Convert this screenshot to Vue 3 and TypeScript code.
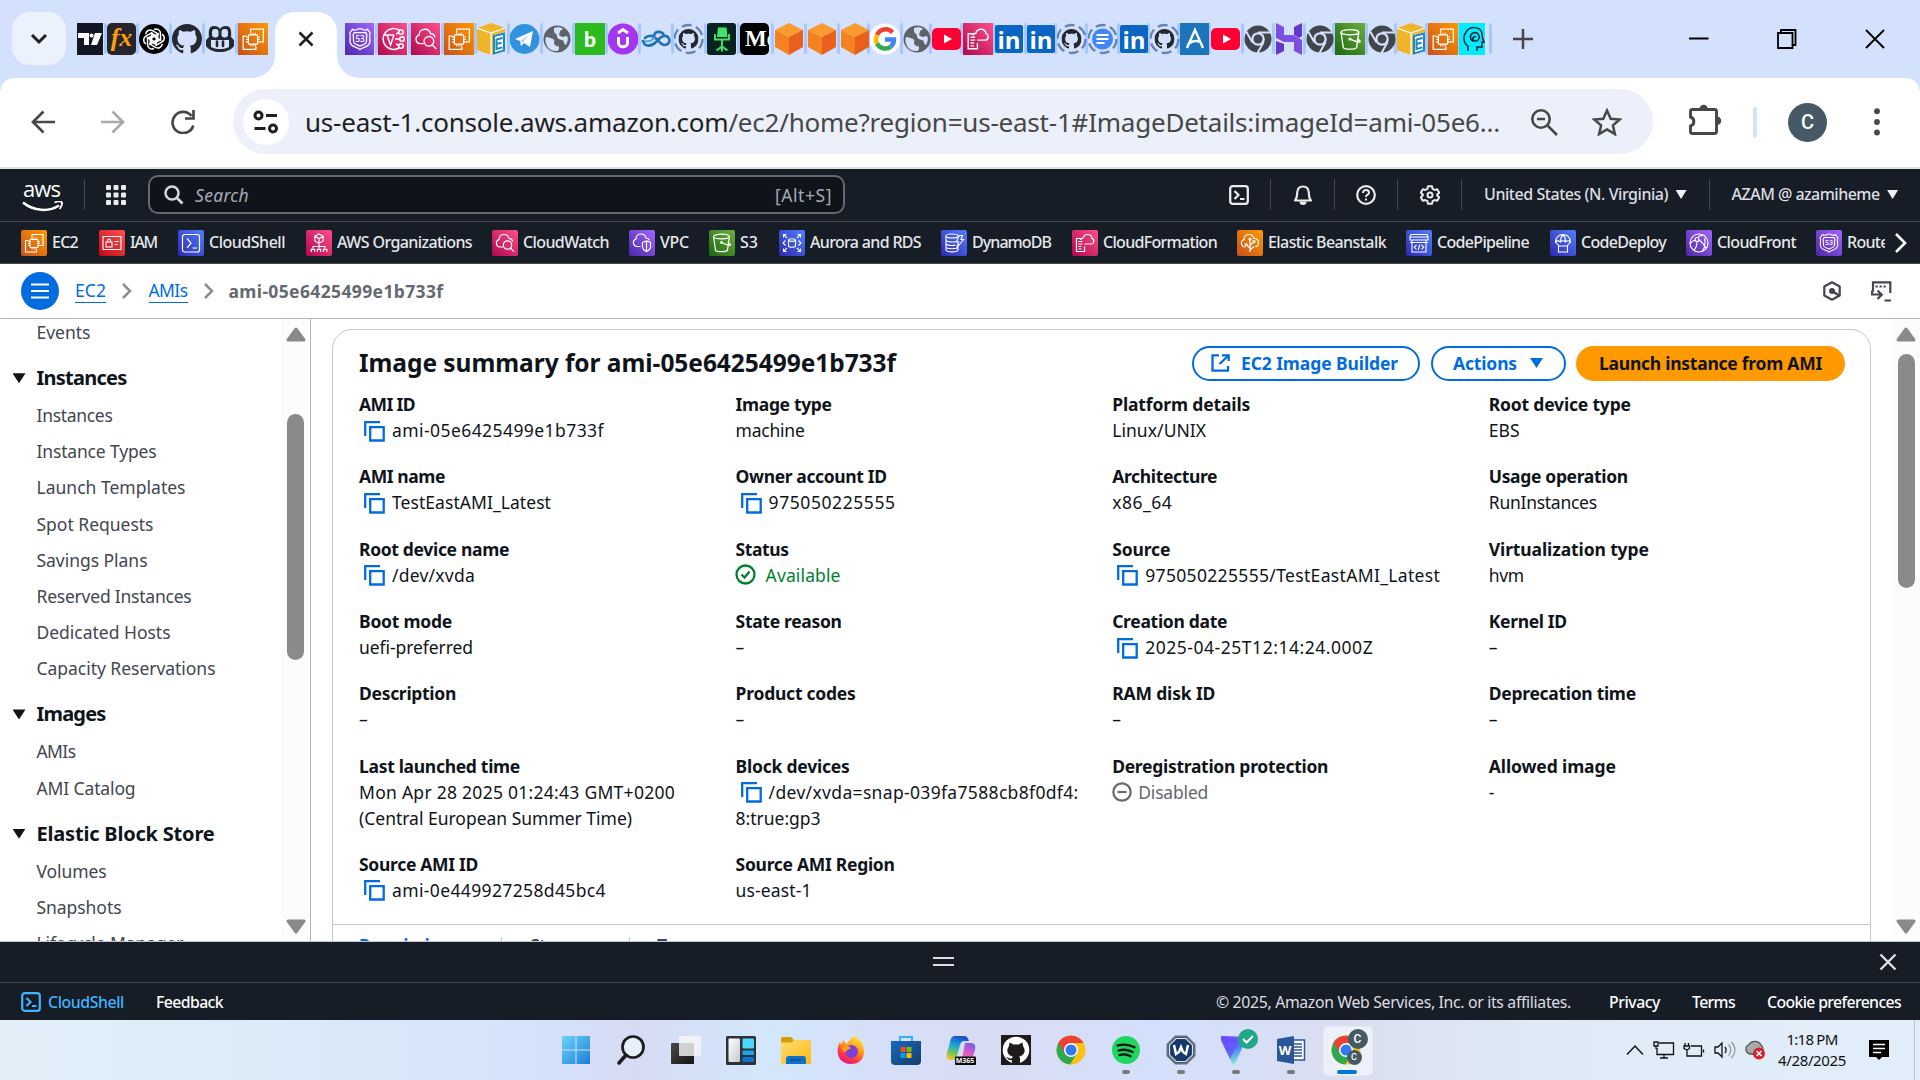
<script setup lang="ts">
type Entry = { label: string; lw: number; kind?: 'cp' | 'ok' | 'off'; lines: [string, number][] }

// Spreads a text's letters so that it takes the given number of pixels.
const vFit = {
  mounted(el: HTMLElement, binding: { value: number }) {
    const n = (el.textContent ?? '').length
    if (!n || !binding.value) return
    const diff = binding.value - el.getBoundingClientRect().width
    el.style.letterSpacing = `${diff / n}px`
  },
}

// Letters that lie on top of an icon's shape.
const marks: Record<string, string> = {
  'f-fx': 'fx', 'f-b': 'b', 'f-medium': 'Me', 'f-in': 'in', 'f-r53': '53', 'g-r53': '53', 't-m365': 'M365', 't-word': 'W',
}

const leftTabs = [
  { icon: 'f-17', w: 30 }, { icon: 'f-fx', w: 32 }, { icon: 'f-openai', w: 33 },
  { icon: 'f-github', w: 33 }, { icon: 'f-copilot', w: 33 }, { icon: 'f-ec2', w: 36 },
]
const rightTabs: [string, number][] = [
  ['f-r53', 33], ['f-vpc', 33], ['f-cw', 33], ['f-ec2', 33], ['f-box', 33], ['f-telegram', 33], ['f-globe', 32],
  ['f-b', 33], ['f-u', 33], ['f-dolphin', 33], ['f-ghd', 33], ['f-chair', 33], ['f-medium', 34], ['f-cube', 33],
  ['f-cube', 33], ['f-cube', 30], ['f-google', 33], ['f-globe', 29], ['f-yt', 31], ['f-cfn', 32], ['f-in', 32],
  ['f-in', 30], ['f-ghd', 31], ['f-docs', 32], ['f-in', 30], ['f-ghd', 30], ['f-a', 31], ['f-yt', 33],
  ['f-chrome', 31], ['f-h', 31], ['f-chrome', 29], ['f-s3', 33], ['f-chrome', 29], ['f-box', 31], ['f-ec2', 31], ['f-head', 33],
]
const favorites = [
  { n: 'EC2', i: 'g-ec2', c: 'orange', w: 78, t: 26 }, { n: 'IAM', i: 'g-iam', c: 'red', w: 79, t: 27 },
  { n: 'CloudShell', i: 'g-shell', c: 'blue', w: 128, t: 76 }, { n: 'AWS Organizations', i: 'g-org', c: 'pink', w: 186, t: 135 },
  { n: 'CloudWatch', i: 'g-cw', c: 'pink', w: 137, t: 86 }, { n: 'VPC', i: 'g-vpc', c: 'purple', w: 80, t: 29 },
  { n: 'S3', i: 'g-s3', c: 'green', w: 70, t: 18 }, { n: 'Aurora and RDS', i: 'g-rds', c: 'blue', w: 162, t: 111 },
  { n: 'DynamoDB', i: 'g-ddb', c: 'blue', w: 131, t: 79 }, { n: 'CloudFormation', i: 'g-cfn', c: 'pink', w: 165, t: 114 },
  { n: 'Elastic Beanstalk', i: 'g-eb', c: 'orange', w: 169, t: 118 }, { n: 'CodePipeline', i: 'g-pipe', c: 'blue', w: 144, t: 92 },
  { n: 'CodeDeploy', i: 'g-deploy', c: 'blue', w: 136, t: 85 }, { n: 'CloudFront', i: 'g-cf', c: 'purple', w: 130, t: 79 },
  { n: 'Route 53', i: 'g-r53', c: 'purple', w: 120, t: 62 },
]
const sidebar: { head?: string; hw?: number; items: [string, number][] }[] = [
  { items: [['Events', 54]] },
  { head: 'Instances', hw: 90, items: [['Instances', 76], ['Instance Types', 120], ['Launch Templates', 149], ['Spot Requests', 117], ['Savings Plans', 111], ['Reserved Instances', 155], ['Dedicated Hosts', 134], ['Capacity Reservations', 179]] },
  { head: 'Images', hw: 69, items: [['AMIs', 39], ['AMI Catalog', 99]] },
  { head: 'Elastic Block Store', hw: 178, items: [['Volumes', 70], ['Snapshots', 85], ['Lifecycle Manager', 147]] },
]
const details: Entry[] = [
  { label: 'AMI ID', lw: 56, kind: 'cp', lines: [['ami-05e6425499e1b733f', 212]] },
  { label: 'Image type', lw: 96, lines: [['machine', 69]] },
  { label: 'Platform details', lw: 138, lines: [['Linux/UNIX', 94]] },
  { label: 'Root device type', lw: 142, lines: [['EBS', 31]] },
  { label: 'AMI name', lw: 86, kind: 'cp', lines: [['TestEastAMI_Latest', 159]] },
  { label: 'Owner account ID', lw: 151, kind: 'cp', lines: [['975050225555', 127]] },
  { label: 'Architecture', lw: 105, lines: [['x86_64', 60]] },
  { label: 'Usage operation', lw: 139, lines: [['RunInstances', 108]] },
  { label: 'Root device name', lw: 150, kind: 'cp', lines: [['/dev/xvda', 83]] },
  { label: 'Status', lw: 53, kind: 'ok', lines: [['Available', 75]] },
  { label: 'Source', lw: 58, kind: 'cp', lines: [['975050225555/TestEastAMI_Latest', 295]] },
  { label: 'Virtualization type', lw: 160, lines: [['hvm', 35]] },
  { label: 'Boot mode', lw: 93, lines: [['uefi-preferred', 114]] },
  { label: 'State reason', lw: 106, lines: [['–', 0]] },
  { label: 'Creation date', lw: 115, kind: 'cp', lines: [['2025-04-25T12:14:24.000Z', 228]] },
  { label: 'Kernel ID', lw: 78, lines: [['–', 0]] },
  { label: 'Description', lw: 97, lines: [['–', 0]] },
  { label: 'Product codes', lw: 120, lines: [['–', 0]] },
  { label: 'RAM disk ID', lw: 103, lines: [['–', 0]] },
  { label: 'Deprecation time', lw: 147, lines: [['–', 0]] },
  { label: 'Last launched time', lw: 161, lines: [['Mon Apr 28 2025 01:24:43 GMT+0200', 316], ['(Central European Summer Time)', 273]] },
  { label: 'Block devices', lw: 114, kind: 'cp', lines: [['/dev/xvda=snap-039fa7588cb8f0df4:', 310], ['8:true:gp3', 85]] },
  { label: 'Deregistration protection', lw: 216, kind: 'off', lines: [['Disabled', 70]] },
  { label: 'Allowed image', lw: 127, lines: [['-', 0]] },
  { label: 'Source AMI ID', lw: 119, kind: 'cp', lines: [['ami-0e449927258d45bc4', 214]] },
  { label: 'Source AMI Region', lw: 159, lines: [['us-east-1', 76]] },
]
const taskbar = [
  { i: 't-win' }, { i: 't-search' }, { i: 't-view' }, { i: 't-widgets' }, { i: 't-explorer' }, { i: 't-firefox' },
  { i: 't-store' }, { i: 't-m365' }, { i: 't-github' }, { i: 't-chrome' }, { i: 't-spotify', run: true },
  { i: 't-w', run: true }, { i: 't-vpn', run: true }, { i: 't-word', run: true }, { i: 't-chrome2', active: true },
]
</script>

<template>
  <div class="screen">
    <svg class="sprite" aria-hidden="true">
      <defs>
        <linearGradient id="go" x1="0" y1="1" x2="1" y2="0"><stop offset="0" stop-color="#c8511b" /><stop offset="1" stop-color="#f90" /></linearGradient>
        <linearGradient id="gp" x1="0" y1="1" x2="1" y2="0"><stop offset="0" stop-color="#b0084d" /><stop offset="1" stop-color="#ff4f8b" /></linearGradient>
        <linearGradient id="gv" x1="0" y1="1" x2="1" y2="0"><stop offset="0" stop-color="#4d27a8" /><stop offset="1" stop-color="#a166ff" /></linearGradient>
        <linearGradient id="gg" x1="0" y1="1" x2="1" y2="0"><stop offset="0" stop-color="#1b660f" /><stop offset="1" stop-color="#6cae3e" /></linearGradient>
        <linearGradient id="wb" x1="0" y1="0" x2="1" y2="1"><stop offset="0" stop-color="#6fd3fb" /><stop offset="1" stop-color="#1a7fd4" /></linearGradient>
        <linearGradient id="fy" x1="0" y1="0" x2="1" y2="1"><stop offset="0" stop-color="#ffdf70" /><stop offset="1" stop-color="#fbb917" /></linearGradient>
        <linearGradient id="ff" x1=".8" y1="0" x2=".3" y2="1"><stop offset="0" stop-color="#fff44f" /><stop offset=".45" stop-color="#ff980e" /><stop offset=".75" stop-color="#ff3647" /><stop offset="1" stop-color="#e31587" /></linearGradient>
        <linearGradient id="st" x1="0" y1="0" x2="1" y2="1"><stop offset="0" stop-color="#1769c2" /><stop offset="1" stop-color="#173d68" /></linearGradient>
        <linearGradient id="m1" x1=".5" y1="0" x2=".2" y2="1"><stop offset="0" stop-color="#1b4fd0" /><stop offset=".4" stop-color="#1aa6d8" /><stop offset=".7" stop-color="#6dc65a" /><stop offset="1" stop-color="#ffc21c" /></linearGradient>
        <linearGradient id="m2" x1=".7" y1="0" x2=".3" y2="1"><stop offset="0" stop-color="#7a5cf0" /><stop offset=".5" stop-color="#e45cc0" /><stop offset="1" stop-color="#ff7d53" /></linearGradient>
        <linearGradient id="vp" x1=".3" y1="0" x2=".6" y2="1"><stop offset="0" stop-color="#6d4aff" /><stop offset=".45" stop-color="#4d7bf5" /><stop offset="1" stop-color="#7ff5d2" /></linearGradient>
        <linearGradient id="dk" x1="0" y1="0" x2="1" y2="1"><stop offset="0" stop-color="#4a4a4a" /><stop offset="1" stop-color="#141414" /></linearGradient>
        <linearGradient id="wh" x1="0" y1="0" x2="1" y2="1"><stop offset="0" stop-color="#fff" /><stop offset="1" stop-color="#c4c8cc" /></linearGradient>
      </defs>

      <!-- service glyphs -->
      <symbol id="g-ec2" viewBox="0 0 26 26"><g fill="none" stroke="#fff" stroke-width="1.1"><path d="M11 7.500V4.500h11V15.500h-3M7.500 10.500H4.500V22H15.500v-2.500" /><rect x="9" y="9.500" width="8" height="8" rx=".8" /><path d="M11 9.500V7.500M13 9.500V7.500M15 9.500V7.500M11 19.500v-2M13 19.500v-2M15 19.500v-2M9 11.500H7M9 13.500H7M9 15.500H7M19 11.500h-2M19 13.500h-2M19 15.500h-2" stroke-width=".9" /></g></symbol>
      <symbol id="g-iam" viewBox="0 0 26 26"><g fill="none" stroke="#fff" stroke-width="1.1"><path d="M4 6.500h18v13H4zM8.500 7V6M17.500 7V6" /><rect x="7" y="12" width="6" height="5" /><path d="M8.500 12v-1.500a1.500 1.500 0 013 0V12M15.500 11.500h4.500M15.500 14.500h3" /></g></symbol>
      <symbol id="g-shell" viewBox="0 0 26 26"><g fill="none" stroke="#fff" stroke-width="1.200"><rect x="4.500" y="4.500" width="17" height="17.500" rx="2.200" /><path d="M9 8.500l4 4.700-4 4.700M14.500 18h4.500" /></g></symbol>
      <symbol id="g-org" viewBox="0 0 26 26"><g fill="none" stroke="#fff" stroke-width="1.100"><path d="M13 4l4.200 2.300v4.700L13 13.400 8.800 11V6.300zM8.800 6.300L13 8.600l4.200-2.300M13 8.600v7.900M7 18.500v-2h12v2M13 16.500v2" /><path d="M5.200 22v-2.600h3.400V22M11.300 22v-2.600h3.400V22M17.400 22v-2.600h3.400V22" /></g></symbol>
      <symbol id="g-cw" viewBox="0 0 26 26"><g fill="none" stroke="#fff" stroke-width="1.200"><path d="M11 17H8a3.800 3.800 0 01-1-7.400C7 6 9.600 4.500 12 4.500c2.700 0 4.500 1.700 5 4 2.200 0 3.500 1.400 3.800 3" /><circle cx="15.500" cy="15" r="4.200" /><path d="M18.500 18l3.300 3.700" /></g></symbol>
      <symbol id="g-vpc" viewBox="0 0 26 26"><g fill="none" stroke="#fff" stroke-width="1.200"><path d="M11.500 16.500H8a3.800 3.800 0 01-1-7.400C7 5.500 9.600 4 12 4c2.700 0 4.500 1.700 5 4 1.700 0 3 .9 3.600 2.300M13.500 12.500l4-1.700 4 1.700v4c0 2.500-2 4-4 5-2-1-4-2.500-4-5zM17.500 11v10" /></g></symbol>
      <symbol id="g-s3" viewBox="0 0 26 26"><g fill="none" stroke="#fff" stroke-width="1.200"><ellipse cx="12.500" cy="6.500" rx="8" ry="2.300" /><path d="M4.500 6.500l2 13.500c.5 2.200 11.500 2.200 12 0l2-13.500M12.500 12.500c3.500 1.800 9 3.500 9.200 2.500s-1.800-2-3-2.500" /><circle cx="12.500" cy="12.500" r=".8" /></g></symbol>
      <symbol id="g-rds" viewBox="0 0 26 26"><g fill="none" stroke="#fff" stroke-width="1.100"><ellipse cx="13" cy="10" rx="3.500" ry="1.300" /><path d="M9.500 10v6c0 1.700 7 1.700 7 0v-6M8 8L4.500 4.500M4.500 7.500v-3h3M18 8l3.500-3.500M18.500 4.500h3v3M8 18l-3.500 3.500M4.500 18.500v3h3M18 18l3.500 3.500M21.500 18.500v3h-3M6.500 10.500L4 13l2.500 2.500M19.500 10.500L22 13l-2.500 2.500" /></g></symbol>
      <symbol id="g-ddb" viewBox="0 0 26 26"><g fill="none" stroke="#fff" stroke-width="1.100"><ellipse cx="11" cy="6" rx="6" ry="2" /><path d="M5 6v14c0 2.500 12 2.500 12 0v-3M5 10c0 2 7 2.500 10 1.500M5 13.500c0 2 7 2.500 9.500 1.500M5 17c0 2 9 2.500 12 .5M18 5.500h3.500l-1.500 4h2.500L16 17.500l1.500-5.500h-2z" /></g></symbol>
      <symbol id="g-cfn" viewBox="0 0 26 26"><g fill="none" stroke="#fff" stroke-width="1.200"><path d="M12.500 16.500V21.500h-8V8.500H9M6.500 11.500h4M6.500 14h4M6.500 16.500h3M6.500 19h3M12.500 14h6.700a2.900 2.900 0 00.8-5.600C19.800 6 17.800 4.500 15.500 4.500c-2.600 0-4 1.700-4.300 3.500-1.700.2-2.500 1-2.500 2" /></g></symbol>
      <symbol id="g-eb" viewBox="0 0 26 26"><g fill="none" stroke="#fff" stroke-width="1.200"><path d="M8.500 17H8a3.800 3.800 0 01-1-7.400C7 6 9.600 4.500 12 4.500c2.700 0 4.500 1.700 5 4 2.400 0 4.500 1.500 4.500 4.200 0 2.300-1.500 4-3.500 4M13 22V9M13 18l-3.500-3M13 15.500l3.500-3.500M13 20l4-3.500" /><circle cx="13" cy="9" r="1" /><circle cx="9" cy="14.500" r="1" /><circle cx="17" cy="11.500" r="1" /></g></symbol>
      <symbol id="g-pipe" viewBox="0 0 26 26"><g fill="none" stroke="#fff" stroke-width="1.100"><path d="M4 7l1-2.500h16L22 7v3H4zM4 7h18M6 10v12h14V10M4 12.500h18M10.500 15l-2.300 2.200 2.300 2.200M15.500 15l2.300 2.200-2.300 2.200M13.800 14.500l-1.600 5.500" /></g></symbol>
      <symbol id="g-deploy" viewBox="0 0 26 26"><g fill="none" stroke="#fff" stroke-width="1.100"><path d="M5.500 12a7.500 7.500 0 0115 0c-1.500-1.500-3.500-1.500-5 0-1.500-1.500-3.500-1.500-5 0-1.500-1.500-3.500-1.500-5 0zM13 4.500c-2 2-2.500 4.500-2.500 7.500M13 4.500c2 2 2.500 4.500 2.500 7.500M5.500 12L9 16M20.500 12L17 16M8.500 16h9v6h-9z" /></g></symbol>
      <symbol id="g-cf" viewBox="0 0 26 26"><g fill="none" stroke="#fff" stroke-width="1.100"><circle cx="13" cy="13" r="9" /><path d="M10 10c-2.500.5-5 2-6 4M12 7c2-1.500 5-2 7-1.500M12.500 9.500c3 2 6 6 7.500 9M11 12c0 3-1 6-3 8.500M18.500 8c1 4 .5 9-2 13" /><circle cx="11" cy="9.500" r="2" /></g></symbol>
      <symbol id="g-r53" viewBox="0 0 26 26"><g fill="none" stroke="#fff" stroke-width="1.100"><path d="M6.500 4.500c1.500 1 3 .9 4 .3.800-.6 1.500-.8 2.500-.8s1.700.2 2.500.8c1 .6 2.500.7 4-.3L22 8c-2 3 1.500 6.500-1.500 10-2 2.500-5.500 2-7.500 4.200-2-2.200-5.500-1.700-7.500-4.200C2.500 14.500 6 11 4 8z" /><path d="M8 7.500h10l1 2c-1 2.500.5 5-1 7-1.200 1.400-3.500 1.500-5 2.700-1.500-1.200-3.800-1.300-5-2.700-1.500-2 0-4.500-1-7z" /></g></symbol>

      <symbol id="gh" viewBox="0 0 16 16"><path d="M8 0C3.580 0 0 3.580 0 8c0 3.540 2.290 6.530 5.470 7.590.4.070.55-.17.55-.38 0-.19-.01-.82-.01-1.490-2.010.37-2.530-.49-2.690-.94-.09-.23-.48-.94-.82-1.130-.28-.15-.68-.52-.01-.53.63-.01 1.080.58 1.230.82.72 1.210 1.870.87 2.330.66.070-.52.28-.87.51-1.070-1.780-.2-3.640-.89-3.640-3.950 0-.87.31-1.590.82-2.150-.08-.2-.36-1.020.08-2.120 0 0 .67-.21 2.200.82.64-.18 1.320-.27 2-.27.68 0 1.360.09 2 .27 1.530-1.040 2.200-.82 2.200-.82.44 1.100.16 1.920.08 2.120.51.56.82 1.270.82 2.150 0 3.070-1.870 3.750-3.650 3.950.29.25.54.73.54 1.480 0 1.070-.01 1.930-.01 2.200 0 .21.15.46.55.38A8.013 8.013 0 0016 8c0-4.420-3.580-8-8-8z" /></symbol>

      <!-- favicons -->
      <symbol id="f-17" viewBox="0 0 30 32"><path d="M0 0h26v32H0z" fill="#131722" /><path d="M1 10h11v12H7V15H1zM18 10h7l-5 12h-6z" fill="#fff" /><circle cx="14.500" cy="12.500" r="2" fill="#fff" /></symbol>
      <symbol id="f-fx" viewBox="0 0 30 32"><rect width="29" height="32" rx="5" fill="#25252b" /></symbol>
      <symbol id="f-openai" viewBox="0 0 30 32"><circle cx="15" cy="16" r="15" fill="#000" /><g fill="none" stroke="#fff" stroke-width="1.500"><path id="oa" d="M15 6.500c3-1.500 6.500.5 6.500 4v6L15 20.500M13 14.500l7-4" /><use href="#oa" transform="rotate(60 15 16)" /><use href="#oa" transform="rotate(120 15 16)" /><use href="#oa" transform="rotate(180 15 16)" /><use href="#oa" transform="rotate(240 15 16)" /><use href="#oa" transform="rotate(300 15 16)" /></g></symbol>
      <symbol id="f-github" viewBox="0 0 30 32"><use href="#gh" x="0" y="1" width="30" height="30" fill="#24292f" /></symbol>
      <symbol id="f-copilot" viewBox="0 0 30 32"><path d="M4 14C3 6 5 3 9 3c3 0 5 1 6 3 1-2 3-3 6-3 4 0 6 3 5 11l3 3v6c-3 4-8 6-14 6S4 27 1 23v-6z" fill="#24292f" /><rect x="7" y="6" width="6.500" height="8.500" rx="3" fill="#d3e1fc" /><rect x="16.500" y="6" width="6.500" height="8.500" rx="3" fill="#d3e1fc" /><path d="M6 17h18v7c-5 2.700-13 2.700-18 0z" fill="#d3e1fc" /><path d="M12 18.500v4.500M18 18.500v4.500" stroke="#24292f" stroke-width="2.600" stroke-linecap="round" /></symbol>
      <symbol id="f-ec2" viewBox="0 0 30 32"><path d="M0 0h30v32H0z" fill="url(#go)" /><use href="#g-ec2" x="0" y="1" width="30" height="30" /></symbol>
      <symbol id="f-r53" viewBox="0 0 30 32"><path d="M0 0h29v32H0z" fill="url(#gv)" /><use href="#g-r53" x="0" y="1" width="30" height="30" /></symbol>
      <symbol id="f-cw" viewBox="0 0 30 32"><path d="M0 0h29v32H0z" fill="url(#gp)" /><use href="#g-cw" x="0" y="1" width="30" height="30" /></symbol>
      <symbol id="f-cfn" viewBox="0 0 30 32"><path d="M0 0h30v32H0z" fill="url(#gp)" /><use href="#g-cfn" x="0" y="1" width="30" height="30" /></symbol>
      <symbol id="f-s3" viewBox="0 0 30 32"><path d="M0 0h30v32H0z" fill="url(#gg)" /><use href="#g-s3" x="1" y="2" width="29" height="29" /></symbol>
      <symbol id="f-vpc" viewBox="0 0 30 32"><path d="M0 0h29v32H0z" fill="url(#gp)" /><g fill="none" stroke="#fff" stroke-width="1.500"><path d="M21 7A10.500 10.500 0 1021 25M6 12h10M9 12l3.500 10L16 12" /><circle cx="23" cy="9" r="2.300" /><circle cx="24" cy="16" r="2.300" /><circle cx="23" cy="23" r="2.300" /><path d="M17 16h4M18 11l3-1.500M18 21l3 1.500" /></g></symbol>
      <symbol id="f-box" viewBox="0 0 30 32"><path d="M0 5L14 0l14 5v22l-14 5L0 27z" fill="#f0b429" /><path d="M0 5l14 5 14-5M14 10v22" stroke="#fff" stroke-width="1.300" fill="none" /><path d="M16 12l12-3v19l-12 4z" fill="#fff" /><path d="M17 13l10-2.500v17L17 30.500z" fill="none" stroke="#1b88c9" stroke-width="2" /><path d="M19.500 16.500l6-1.500M19.500 21l5-1.300M19.500 26l6-1.600M19.500 16v11" stroke="#1b88c9" stroke-width="2" fill="none" /></symbol>
      <symbol id="f-telegram" viewBox="0 0 30 32"><circle cx="14.500" cy="16" r="15" fill="#2f93e0" /><path d="M5 16L23 8l-3 16-6-4-3 3-1-5z" fill="#fff" /><path d="M10 18l9-6-6 8" fill="#b7dbf5" /></symbol>
      <symbol id="f-globe" viewBox="0 0 30 32"><circle cx="14" cy="16" r="13.500" fill="#5f6368" /><path d="M3 14c4 1 7 1 8 3s-1 3 1 5 4 0 4 3-2 3-3 3C5 28 1 20 3 14zM11 5c3-1 7-1 9 1l-3 2-1 4 3 2 5-1c2 3 0 7-1 9-3-1-1-4-4-5s-5-1-5-4-3-2-3-5z" fill="#d3e1fc" /></symbol>
      <symbol id="f-b" viewBox="0 0 30 32"><path d="M0 0h30v32H0z" fill="#2cbb1e" /></symbol>
      <symbol id="f-u" viewBox="0 0 30 32"><circle cx="15" cy="16" r="15.500" fill="#a435f0" /><path d="M10 10l5-3.500 5 3.500M10.500 14v6c0 5 9 5 9 0v-6" fill="none" stroke="#fff" stroke-width="3" /></symbol>
      <symbol id="f-dolphin" viewBox="0 0 30 32"><path d="M2 18c2 7 9 5 13 1 4-5 8-8 12-5 3 4 1 8-4 8-5-1-6-6-10-8-3-2-7-1-9 1M13 13c1-6 9-5 10 0" fill="none" stroke="#1e73b4" stroke-width="2.600" stroke-linecap="round" /><path d="M3 18c4 1 8 0 11-4" stroke="#44a0d8" stroke-width="1.800" fill="none" /></symbol>
      <symbol id="f-ghd" viewBox="0 0 30 32"><circle cx="14.500" cy="16" r="14" fill="none" stroke="#6683b5" stroke-width="2.300" stroke-dasharray="10 4.660" /><use href="#gh" x="4.500" y="6" width="20" height="20" fill="#24292f" /></symbol>
      <symbol id="f-docs" viewBox="0 0 30 32"><circle cx="14.500" cy="16" r="14" fill="none" stroke="#6683b5" stroke-width="2.300" stroke-dasharray="10 4.660" /><circle cx="14.500" cy="16" r="10.500" fill="#4285f4" /><path d="M8.500 12h12M8.500 16h12M8.500 20h8" stroke="#fff" stroke-width="1.900" /></symbol>
      <symbol id="f-chair" viewBox="0 0 30 32"><rect width="29" height="32" rx="3" fill="#06231f" /><path d="M11 4.500h8.500l1 9.500H10z" fill="#41e36a" /><path d="M8 11v5.500h14V11M15 16v8M9.500 27.500l5.500-4 5.500 4M15 23v5.500" stroke="#41e36a" stroke-width="1.900" fill="none" /></symbol>
      <symbol id="f-medium" viewBox="0 0 30 32"><rect width="29" height="32" rx="5" fill="#000" /></symbol>
      <symbol id="f-cube" viewBox="0 0 30 32"><path d="M1 7l14-7 14 7-14 7z" fill="#fb9a2e" /><path d="M1 7l14 7v18L1 24z" fill="#f58220" /><path d="M29 7l-14 7v18l14-8z" fill="#e9601b" /></symbol>
      <symbol id="f-google" viewBox="0 0 30 32"><circle cx="15" cy="16" r="15.500" fill="#fff" /><g fill="none" stroke-width="4.500"><path d="M22.500 9.500A9.300 9.300 0 007 12" stroke="#ea4335" /><path d="M7 12a9.500 9.500 0 000 8.500" stroke="#fbbc05" /><path d="M7 20.500a9.300 9.300 0 0014 3" stroke="#34a853" /><path d="M21 23.500c2-1.800 3-4 3-7h-9" stroke="#4285f4" /></g></symbol>
      <symbol id="f-yt" viewBox="0 0 30 32"><rect y="5" width="29" height="22" rx="5" fill="#ff0033" /><path d="M12 11.500v9l8-4.500z" fill="#fff" /></symbol>
      <symbol id="f-in" viewBox="0 0 30 32"><rect y="2" width="28" height="28" rx="2" fill="#0a66c2" /></symbol>
      <symbol id="f-a" viewBox="0 0 30 32"><path d="M0 0h29v32H0z" fill="#1c75bc" /><path d="M7 25l8-18 8 18M7.500 22.500c3-5 9-5 12-4" stroke="#fff" stroke-width="2.400" fill="none" /></symbol>
      <symbol id="f-chrome" viewBox="0 0 30 32"><circle cx="14" cy="16" r="13.500" fill="#41464b" /><circle cx="14" cy="16" r="6.800" fill="#d3e1fc" /><circle cx="14" cy="16" r="4.500" fill="#41464b" /><path d="M14 9.500h12.500M8.400 19.300L2.300 8.700M19.500 19.300L13.500 30" stroke="#d3e1fc" stroke-width="2" /></symbol>
      <symbol id="f-h" viewBox="0 0 30 32"><path d="M1 0l8 4v8h9l9 5v15l-8-4v-9H9L1 15z" fill="#7b4fe0" /><path d="M19 4l8-4v13l-3 2-5-3zM1 18l8 3v7l-8 4z" fill="#6438cc" /></symbol>
      <symbol id="f-head" viewBox="0 0 30 32"><path d="M0 0h26v32H0z" fill="#00edff" /><path d="M9 28v-5C4 20 4 13 7 9c4-6 14-6 16 1l.5 5 1.500 4h-2v5h-5v4M15 18c-4 0-5-6-1-8 5-2 8 4 5 7-2 2-6 1-5-2 0-1 2-2 3-1" fill="none" stroke="#123" stroke-width="1.500" /></symbol>

      <!-- desktop icons -->
      <symbol id="t-win" viewBox="0 0 30 30"><path d="M1 1h13.500v13.500H1zM15.500 1H29v13.500H15.500zM1 15.500h13.500V29H1zM15.500 15.500H29V29H15.500z" fill="url(#wb)" /></symbol>
      <symbol id="t-search" viewBox="0 0 30 30"><circle cx="17" cy="12" r="10.500" fill="#e6f0fb" stroke="#1d1d1d" stroke-width="2.700" /><path d="M10 20l-7 8" stroke="#1d1d1d" stroke-width="3.500" stroke-linecap="round" /></symbol>
      <symbol id="t-view" viewBox="0 0 30 30"><rect y="8" width="23" height="21" rx="1" fill="url(#dk)" /><rect x="8" y="1" width="22" height="20" rx="1" fill="#f5f5f5" opacity=".82" /></symbol>
      <symbol id="t-widgets" viewBox="0 0 30 30"><rect width="30" height="29" y="1" rx="1.500" fill="#2e3236" /><rect x="2.500" y="3.500" width="11.500" height="23.500" rx="1" fill="url(#wh)" /><rect x="16.500" y="3.500" width="11.500" height="10" rx="1" fill="#4cd7ff" /><rect x="16.500" y="15.500" width="11.500" height="4.500" rx="1" fill="#22a5e8" /><rect x="16.500" y="22" width="11.500" height="5" rx="1" fill="#0a74d0" /></symbol>
      <symbol id="t-explorer" viewBox="0 0 30 30"><path d="M0 3.500Q0 2 1.500 2H10l3 3h17v7H0z" fill="#dc9a06" /><path d="M0 7.500h10.500L13 5h17v24H0z" fill="url(#fy)" /><path d="M5 29v-5q0-3 3-3h14q3 0 3 3v5z" fill="#0d72c5" /><path d="M9 25h12" stroke="#0b4f8d" stroke-width="1.500" /></symbol>
      <symbol id="t-firefox" viewBox="0 0 30 30"><path d="M17 2c1-1 2-2 2-2 2 4 5 4 7 8 4 8 3 21-11 21C5 29 0 21 2 12c.5-3 2-5 2-5l1 3c1-3 2-4 3-5 0 2 1 3 3 4 2-4 4-5 6-7z" fill="url(#ff)" /><circle cx="15.500" cy="16.500" r="6.500" fill="#7a3fd8" /><path d="M6 11c4-2 7 0 9 2-2 2-4 1-5 4-3 0-5-3-4-6z" fill="#ff9a1a" /></symbol>
      <symbol id="t-store" viewBox="0 0 30 30"><path d="M9 7V2h12v5" fill="none" stroke="#2fb4f0" stroke-width="2" /><path d="M0 6h30v20q0 4-4 4H4q-4 0-4-4z" fill="url(#st)" /><path d="M9.500 12h5v5h-5z" fill="#f25022" /><path d="M15.500 12h5v5h-5z" fill="#7fba00" /><path d="M9.500 18h5v5h-5z" fill="#00a4ef" /><path d="M15.500 18h5v5h-5z" fill="#ffb900" /></symbol>
      <symbol id="t-m365" viewBox="0 0 30 30"><path d="M9 1h9c3 0 4 2 5 5h-4c-3 0-4 1-5 4l-3 11c-1 3-2 4-5 4H4c-3 0-4-3-3-7L4 7c1-4 2-6 5-6z" fill="url(#m1)" /><path d="M19 8h6c4 0 5 3 4 7l-3 10c-1 3-2 4-5 4H11c3 0 4-2 5-5z" fill="url(#m2)" /><rect x="9" y="21.500" width="21" height="8.500" rx="1" fill="#0b0b0b" /></symbol>
      <symbol id="t-github" viewBox="0 0 30 30"><path d="M0 0h30v30H0z" fill="#1f1b1d" /><circle cx="15" cy="15" r="13.300" fill="#fff" /><path d="M8.500 7.500l4 2h5l4-2 .7 4c3.500 5 0 9.500-4 10 1.300 1.500.8 4 .8 7.500h-8V25c-4 1-4-2-6-3 2-.5 3 2.500 6 1.200l.8-1.700c-4-.5-7.500-5-4-10z" fill="#1f1b1d" /></symbol>
      <symbol id="t-chrome" viewBox="0 0 30 30"><circle cx="15" cy="15" r="14.500" fill="#fbc116" /><path d="M15 15L2.500 7.700A14.500 14.500 0 0127.500 8H15z" fill="#ea4335" /><path d="M15 15L2.500 7.700A14.500 14.500 0 0014 29.500l7-11z" fill="#2da94f" /><path d="M2.500 7.700A14.500 14.500 0 0127.500 8H15v7L8.900 18.500z" fill="#ea4335" /><circle cx="15" cy="15" r="7" fill="#fff" /><circle cx="15" cy="15" r="5.500" fill="#2f7cf0" /></symbol>
      <symbol id="t-spotify" viewBox="0 0 30 30"><circle cx="15" cy="15" r="14" fill="#1ed760" /><path d="M6.500 10.500c6-1.700 12-1 17 1.700M7.500 15.500c5-1.300 10-.8 14 1.600M8.500 20c4-1 8-.6 11 1.300" fill="none" stroke="#111" stroke-width="2.300" stroke-linecap="round" /></symbol>
      <symbol id="t-w" viewBox="0 0 30 30"><path d="M9.500 1.500h11l8 8v11l-8 8h-11l-8-8v-11z" fill="#17386a" stroke="#68727d" stroke-width="2" /><path d="M10.200 3.500h9.600l6.700 6.700v9.600l-6.700 6.700h-9.600l-6.700-6.700v-9.600z" fill="none" stroke="#dfe4e8" stroke-width="1.200" /><path d="M8 10l2 9 3-2 2-5 2 5 3 2 2-9" fill="none" stroke="#fff" stroke-width="2.500" /></symbol>
      <symbol id="t-vpn" viewBox="0 0 30 30"><path d="M1 1l25 1L14 29q-2 1-3-1L0 5Q-1 1 1 1z" fill="url(#vp)" /><path d="M1 1l17 5L9 24 0 5Q-1 1 1 1z" fill="#6d4aff" opacity=".65" /></symbol>
      <symbol id="t-word" viewBox="0 0 30 30"><path d="M15 5h13.500v20H15z" fill="#fff" stroke="#2b579a" stroke-width="1.500" /><path d="M17 9h9M17 12h9M17 15h9M17 18h9M17 21h9" stroke="#2b579a" stroke-width="1.500" /><path d="M1 4l17-3v28L1 26z" fill="#2b579a" /></symbol>
      <symbol id="t-chrome2" viewBox="0 0 30 30"><use href="#t-chrome" width="30" height="30" /></symbol>
    </svg>

    <header class="tabstrip">
      <div class="tabsearch"><svg width="18" height="12" viewBox="0 0 18 12"><path d="M2 2l7 7 7-7" fill="none" stroke="#1f1f1f" stroke-width="3" /></svg></div>
      <div class="favs left">
        <span v-for="(t, k) in leftTabs" :key="k" class="fav" :style="{ width: t.w + 'px' }"><svg width="30" height="32"><use :href="'#' + t.icon" /></svg><b v-if="marks[t.icon]" :class="['mark', t.icon]">{{ marks[t.icon] }}</b></span>
      </div>
      <div class="active"><svg width="16" height="16" viewBox="0 0 16 16"><path d="M1.500 1.500l13 13M14.500 1.500l-13 13" stroke="#1f1f1f" stroke-width="2.500" /></svg></div>
      <div class="favs right">
        <span v-for="(t, k) in rightTabs" :key="k" class="fav" :style="{ width: t[1] + 'px' }"><svg width="30" height="32"><use :href="'#' + t[0]" /></svg><b v-if="marks[t[0]]" :class="['mark', t[0]]">{{ marks[t[0]] }}</b></span>
      </div>
      <svg class="plus" width="20" height="20" viewBox="0 0 20 20"><path d="M10 0v20M0 10h20" stroke="#474747" stroke-width="2.500" /></svg>
      <div class="winctl">
        <svg width="20" height="20" viewBox="0 0 20 20"><path d="M0 9.500h19.500" stroke="#000" stroke-width="2" /></svg>
        <svg width="20" height="20" viewBox="0 0 20 20"><path d="M1 4h14.500v15H1zM4 4V1h14.500v15H16" fill="none" stroke="#000" stroke-width="1.800" /></svg>
        <svg width="20" height="20" viewBox="0 0 20 20"><path d="M1 1l18 18M19 1L1 19" stroke="#000" stroke-width="1.900" /></svg>
      </div>
    </header>

    <div class="toolbar">
      <div class="navbtns">
        <svg width="24" height="24" viewBox="0 0 24 24"><path d="M24 12H2M12.500 1.500L2 12l10.500 10.500" fill="none" stroke="#474747" stroke-width="2.700" /></svg>
        <svg width="24" height="24" viewBox="0 0 24 24"><path d="M0 12h22M11.500 1.500L22 12 11.500 22.500" fill="none" stroke="#a9a9a9" stroke-width="2.700" /></svg>
        <svg width="24" height="24" viewBox="0 0 24 24"><path d="M22.300 15.500A10.600 10.600 0 1120.500 6M22.500 0v8.500H14" fill="none" stroke="#474747" stroke-width="2.700" /></svg>
      </div>
      <div class="omnibox">
        <span class="site"><svg width="26" height="24" viewBox="0 0 26 24"><g fill="none" stroke="#1f1f1f" stroke-width="3"><circle cx="5.500" cy="5.500" r="3.500" /><path d="M13 5.500h11M1.500 18.500h11" /><circle cx="20" cy="18.500" r="3.500" /></g></svg></span>
        <span class="url" v-fit="1195">us-east-1.console.aws.amazon.com<i>/ec2/home?region=us-east-1#ImageDetails:imageId=ami-05e6...</i></span>
        <svg class="zoomout" width="28" height="28" viewBox="0 0 28 28"><circle cx="11" cy="11" r="8.700" fill="none" stroke="#474747" stroke-width="2.600" /><path d="M17 17l10 10M7 11h8" stroke="#474747" stroke-width="2.600" /></svg>
        <svg class="star" width="30" height="28" viewBox="0 0 30 28"><path d="M15 2.500l3.700 8.200 9 .8-6.800 5.900 2 8.700-7.900-4.600-7.900 4.600 2-8.700-6.800-5.900 9-.8z" fill="none" stroke="#474747" stroke-width="2.500" /></svg>
      </div>
      <svg class="ext" width="34" height="34" viewBox="0 0 34 34"><path d="M2.500 8.500q0-2 2-2h22q2 0 2 2v20q0 2-2 2h-22q-2 0-2-2v-5.500a4.700 4.700 0 000-9z" fill="none" stroke="#474747" stroke-width="2.900" /><path d="M11.500 6a4.200 4.200 0 018.400 0zM29 13.500a4 4 0 010 8.500z" fill="#474747" /></svg>
      <span class="tsep"></span>
      <span class="avatar">C</span>
      <svg class="kebab" width="8" height="28" viewBox="0 0 8 28"><g fill="#474747"><circle cx="4" cy="3.200" r="2.900" /><circle cx="4" cy="14" r="2.900" /><circle cx="4" cy="24.500" r="2.900" /></g></svg>
    </div>

    <nav class="awsnav">
      <div class="row1">
        <span class="awslogo"><b v-fit="37">aws</b><svg width="42" height="12" viewBox="0 0 42 12"><path d="M1 1.500c11 9 26 9.500 36 3" fill="none" stroke="#fff" stroke-width="2.500" /><path d="M32.500 1.500c3-1 6-1.200 7-.5s.2 4-1.800 7" fill="none" stroke="#fff" stroke-width="1.800" /></svg></span>
        <i class="vd d1"></i>
        <svg class="apps" width="20" height="20" viewBox="0 0 20 20"><g fill="#e9ebed"><rect v-for="k in 9" :key="k" :x="((k - 1) % 3) * 7.500" :y="Math.floor((k - 1) / 3) * 7.500" width="5" height="5" rx="1" /></g></svg>
        <div class="search">
          <svg width="20" height="20" viewBox="0 0 20 20"><circle cx="8" cy="8" r="6.500" fill="none" stroke="#d5d9de" stroke-width="2.500" /><path d="M12.500 12.500l6 6" stroke="#d5d9de" stroke-width="2.700" /></svg>
          <em v-fit="54">Search</em><span class="alt" v-fit="57">[Alt+S]</span>
        </div>
        <div class="icons">
          <svg width="20" height="20" viewBox="0 0 20 20"><rect x="1.200" y="1.200" width="17.600" height="17.600" rx="2.500" fill="none" stroke="#e9ebed" stroke-width="2.300" /><path d="M5.500 6l4 4-4 4M11 14h4.500" fill="none" stroke="#e9ebed" stroke-width="2.200" /></svg>
          <i class="vd"></i>
          <svg width="20" height="20" viewBox="0 0 20 20"><path d="M2 15.500c2.500-2.500 2-5 2.200-8C4.500 3.500 7 1.500 10 1.500s5.500 2 5.800 6c.2 3-.3 5.500 2.200 8z" fill="none" stroke="#e9ebed" stroke-width="2.200" stroke-linejoin="round" /><path d="M6.500 16.500a3.500 3.500 0 007 0z" fill="#e9ebed" /></svg>
          <i class="vd"></i>
          <svg width="20" height="20" viewBox="0 0 20 20"><circle cx="10" cy="10" r="8.800" fill="none" stroke="#e9ebed" stroke-width="2.200" /><path d="M7 8c0-4 6-3.700 6-.3 0 2-3 2-3 4.300M10 13.500v2" fill="none" stroke="#e9ebed" stroke-width="2" /></svg>
          <i class="vd"></i>
          <svg width="20" height="20" viewBox="0 0 20 20"><path d="M8 1.200h4l.6 2.600 2.100 1.200 2.500-.8 2 3.500-2 1.800v1l2 1.800-2 3.500-2.500-.8-2.100 1.200-.6 2.600H8l-.6-2.600L5.300 15l-2.500.8-2-3.500 2-1.800v-1l-2-1.800 2-3.500 2.500.8 2.100-1.200z" fill="none" stroke="#e9ebed" stroke-width="2" stroke-linejoin="round" /><circle cx="10" cy="10" r="2.500" fill="none" stroke="#e9ebed" stroke-width="2" /></svg>
          <i class="vd"></i>
        </div>
        <span class="region" v-fit="184">United States (N. Virginia)</span><i class="caret light"></i>
        <i class="vd d2"></i>
        <span class="user" v-fit="148">AZAM @ azamiheme</span><i class="caret light"></i>
      </div>
      <div class="row2">
        <div class="favlist">
          <span v-for="f in favorites" :key="f.n" class="svc" :style="{ width: f.w + 'px' }"><i :class="['tile', f.c]"><svg width="26" height="26"><use :href="'#' + f.i" /></svg><em v-if="marks[f.i]" :class="['mark', f.i]">{{ marks[f.i] }}</em></i><b v-fit="f.t">{{ f.n }}</b></span>
        </div>
        <svg class="more" width="14" height="20" viewBox="0 0 14 20"><path d="M2 1l9 9-9 9" fill="none" stroke="#fff" stroke-width="2.600" /></svg>
      </div>
    </nav>

    <div class="crumbs">
      <span class="burger"><svg width="18" height="16" viewBox="0 0 18 16"><path d="M0 1.500h18M0 8h18M0 14.500h18" stroke="#fff" stroke-width="2.200" /></svg></span>
      <a class="c1" v-fit="31">EC2</a>
      <svg class="chev" width="10" height="16" viewBox="0 0 10 16"><path d="M1 1l7 7-7 7" fill="none" stroke="#8c8c94" stroke-width="2.500" /></svg>
      <a class="c2" v-fit="39">AMIs</a>
      <svg class="chev" width="10" height="16" viewBox="0 0 10 16"><path d="M1 1l7 7-7 7" fill="none" stroke="#8c8c94" stroke-width="2.500" /></svg>
      <b v-fit="215">ami-05e6425499e1b733f</b>
      <svg class="q" width="20" height="20" viewBox="0 0 20 20"><path d="M10 1.300l7.700 4.200v9L10 18.700l-7.700-4.200v-9z" fill="none" stroke="#424650" stroke-width="2.200" stroke-linejoin="round" /><circle cx="10" cy="10" r="3" fill="#424650" /><path d="M11 10.500l6 4" stroke="#424650" stroke-width="2.200" /></svg>
      <svg class="ql" width="21" height="21" viewBox="0 0 21 21"><path d="M2 10.500V1.300h17.300V12M2 6" fill="none" stroke="#424650" stroke-width="2.200" /><path d="M4.500 5.500h2.200M8.500 5.500h2.200M12.500 5.500h2.200M1 9.500v4h8.500M6.500 9.500l4.300 4.200-4.300 4.300M13.500 19.500H20" fill="none" stroke="#424650" stroke-width="2.200" /></svg>
    </div>

    <div class="body">
      <aside class="side">
        <div class="sidelist">
          <template v-for="(s, k) in sidebar" :key="k">
            <h3 v-if="s.head"><i class="caret dark"></i><span v-fit="s.hw">{{ s.head }}</span></h3>
            <p v-for="it in s.items" :key="it[0]"><span v-fit="it[1]">{{ it[0] }}</span></p>
          </template>
        </div>
        <div class="track">
          <svg width="20" height="15" viewBox="0 0 20 15"><path d="M10 2L18 13H2z" fill="#8a8a8a" stroke="#8a8a8a" stroke-width="3" stroke-linejoin="round" /></svg>
          <i class="thumb st"></i>
          <svg width="20" height="15" viewBox="0 0 20 15"><path d="M10 13L18 2H2z" fill="#8a8a8a" stroke="#8a8a8a" stroke-width="3" stroke-linejoin="round" /></svg>
        </div>
      </aside>
      <main>
        <section class="card">
          <div class="title">
            <h1 v-fit="537">Image summary for ami-05e6425499e1b733f</h1>
            <button class="btn b1"><svg width="19" height="18" viewBox="0 0 19 18"><path d="M8 1.300H1.500v15.400h15.500V12M11 1.300h6.700V7M17.500 1.500L8.500 10" fill="none" stroke="#006ce0" stroke-width="2.300" /></svg><span v-fit="157">EC2 Image Builder</span></button>
            <button class="btn b2"><span v-fit="64">Actions</span><i class="caret blue"></i></button>
            <button class="btn b3"><span v-fit="223">Launch instance from AMI</span></button>
          </div>
          <div class="grid">
            <div v-for="d in details" :key="d.label" class="cell">
              <div class="lab"><span v-fit="d.lw">{{ d.label }}</span></div>
              <div v-for="(l, k) in d.lines" :key="k" :class="['val', d.kind]">
                <svg v-if="d.kind === 'cp' && k === 0" class="copyic" width="21" height="21" viewBox="0 0 21 21"><path d="M1.200 15V1.200H16M6.200 6.200h13.500v13.300H6.200z" fill="none" stroke="#006ce0" stroke-width="2.300" /></svg>
                <svg v-if="d.kind === 'ok'" class="okic" width="21" height="21" viewBox="0 0 21 21"><circle cx="10.500" cy="10.500" r="9" fill="none" stroke="#00802f" stroke-width="2.300" /><path d="M6.500 10.500l3 3 5-6" fill="none" stroke="#00802f" stroke-width="2.300" /></svg>
                <svg v-if="d.kind === 'off'" class="offic" width="20" height="20" viewBox="0 0 20 20"><circle cx="10" cy="10" r="8.700" fill="none" stroke="#656871" stroke-width="2.200" /><path d="M5.500 10h9" stroke="#656871" stroke-width="2.200" /></svg>
                <span v-fit="l[1]">{{ l[0] }}</span>
              </div>
            </div>
          </div>
          <div class="tabs"><span class="on" v-fit="100">Permissions</span><i></i><span class="t2" v-fit="62">Storage</span><i class="i2"></i><span class="t3" v-fit="37">Tags</span></div>
        </section>
      </main>
      <div class="track wide">
        <svg width="20" height="15" viewBox="0 0 20 15"><path d="M10 2L18 13H2z" fill="#8a8a8a" stroke="#8a8a8a" stroke-width="3" stroke-linejoin="round" /></svg>
        <i class="thumb mt"></i>
        <svg width="20" height="15" viewBox="0 0 20 15"><path d="M10 13L18 2H2z" fill="#8a8a8a" stroke="#8a8a8a" stroke-width="3" stroke-linejoin="round" /></svg>
      </div>
    </div>

    <div class="panel">
      <span class="handle"></span>
      <svg class="px" width="18" height="18" viewBox="0 0 18 18"><path d="M1.500 1.500l15 15M16.500 1.500l-15 15" stroke="#dedee3" stroke-width="2.400" /></svg>
    </div>
    <footer class="foot">
      <svg width="20" height="20" viewBox="0 0 20 20"><rect x="1.200" y="1.200" width="17.600" height="17.600" rx="2.500" fill="none" stroke="#42b4ff" stroke-width="2.200" /><path d="M5.500 6l4 4-4 4M11 14h4.500" fill="none" stroke="#42b4ff" stroke-width="2.100" /></svg>
      <span class="fc" v-fit="76">CloudShell</span><span class="ff" v-fit="67">Feedback</span>
      <span class="copyr" v-fit="355">© 2025, Amazon Web Services, Inc. or its affiliates.</span>
      <span class="fp" v-fit="51">Privacy</span><span class="ft" v-fit="43">Terms</span><span class="fk" v-fit="134">Cookie preferences</span>
    </footer>

    <div class="taskbar">
      <div v-for="t in taskbar" :key="t.i" :class="['app', { act: t.active }]">
        <svg width="30" height="30"><use :href="'#' + t.i" /></svg>
        <b v-if="marks[t.i]" :class="['mark', t.i]">{{ marks[t.i] }}</b>
        <i v-if="t.run" class="dot"></i>
        <i v-if="t.active" class="bar"></i>
        <svg v-if="t.i === 't-vpn'" class="check" width="20" height="20" viewBox="0 0 20 20"><circle cx="10" cy="10" r="10" fill="#1ea885" /><path d="M5 10l3.500 3.500L15 7" fill="none" stroke="#fff" stroke-width="2" /></svg>
        <template v-if="t.active"><b class="pb p1">C</b><b class="pb p2">C</b></template>
      </div>
      <div class="tray">
        <svg width="18" height="12" viewBox="0 0 18 12"><path d="M1 10.500L9 2l8 8.500" fill="none" stroke="#111" stroke-width="1.500" /></svg>
        <svg width="22" height="18" viewBox="0 0 22 18"><path d="M6 2h14.500v11.500H4V7M1 1h4v4H1zM3 5v3M11 13.500V17M7 17h8" fill="none" stroke="#111" stroke-width="1.300" /></svg>
        <svg width="22" height="18" viewBox="0 0 22 18"><path d="M8 5h10.500v10H4v-4M20.500 8.500v3M2 2v3M5.500 2v3M1 5h5.500v2.500L4 9 1 7.500zM4 9v4" fill="none" stroke="#111" stroke-width="1.300" /></svg>
        <svg width="22" height="20" viewBox="0 0 22 20"><path d="M1 7h3l4-4v14l-4-4H1z" fill="none" stroke="#111" stroke-width="1.300" /><path d="M11 7c1.500 2 1.500 4 0 6" fill="none" stroke="#111" stroke-width="1.300" /><path d="M14.500 4.500c3 3.500 3 7.500 0 11M17.500 2c4.500 5 4.500 11 0 16" fill="none" stroke="#999" stroke-width="1.300" /></svg>
        <svg width="22" height="20" viewBox="0 0 22 20"><path d="M6 14a5 5 0 01-1-9.500A7 7 0 0117 5c2 1 2 5 1 9z" fill="#a9a9a9" stroke="#555" stroke-width="1.300" /><circle cx="15" cy="13.500" r="6" fill="#d9202e" /><path d="M12.500 11l5 5M17.500 11l-5 5" stroke="#fff" stroke-width="1.500" /></svg>
      </div>
      <div class="clock"><span v-fit="51">1:18 PM</span><span v-fit="68">4/28/2025</span></div>
      <svg class="notif" width="20" height="20" viewBox="0 0 20 20"><path d="M0 0h20v17h-7l-3 3-3-3H0z" fill="#000" /><path d="M4 4.500h12M4 8.500h12M4 12.500h8" stroke="#fff" stroke-width="1.400" /></svg>
      <i class="peek"></i>
    </div>
  </div>
</template>

<style>
html, body { margin: 0; overflow: hidden; }
</style>
<style scoped>
* { box-sizing: border-box; }
.screen { width: 1920px; height: 1080px; display: flex; flex-direction: column; overflow: hidden; background: #fff; font-family: "Noto Sans", "Open Sans", sans-serif; color: #0f141a; }
.sprite { position: absolute; width: 0; height: 0; }
svg { display: block; flex: none; }
i { font-style: normal; }
span, b, a, em { white-space: nowrap; }
i { flex: none; }

.tabstrip { height: 78px; flex: none; background: #d3e1fc; display: flex; align-items: flex-start; position: relative; }
.tabsearch { width: 54px; height: 53px; margin: 12px 0 0 12px; border-radius: 18px; background: #ebf1fd; display: flex; align-items: center; justify-content: center; flex: none; }
.favs { display: flex; margin-top: 23px; flex: none; }
.favs.left { margin-left: 11px; width: 198px; }
.fav { display: block; flex: none; height: 31px; position: relative; }
.fav:not(:last-child)::after, .right .fav::after { content: ''; position: absolute; right: 0; top: 0; width: 3px; height: 31px; border-radius: 2px; background: #a8c7fa; z-index: 0; }
.fav svg { position: relative; z-index: 1; }
.mark { position: absolute; left: 0; top: 0; z-index: 2; width: 100%; text-align: center; color: #fff; }
.mark.f-fx { font: italic 700 26px/30px "Liberation Serif", serif; color: #ff9d0a; width: 29px; }
.mark.f-b { font: 900 21px/31px Lato, sans-serif; width: 30px; }
.mark.f-medium { font: 700 23px/32px "Liberation Serif", serif; width: 29px; height: 32px; overflow: hidden; text-align: left; padding-left: 5px; }
.mark.f-in { font: 700 24px/33px "Open Sans", sans-serif; width: 28px; }
.mark.f-r53 { font: 500 8px/31px "Noto Sans", sans-serif; width: 30px; }
.mark.g-r53 { font: 500 7px/25px "Noto Sans", sans-serif; }
.mark.t-m365 { font: 700 7px/9px "Open Sans", sans-serif; width: 21px; left: 21px; top: 36px; }
.mark.t-word { font: 700 13px/18px "Open Sans", sans-serif; width: 17px; left: 13px; top: 21px; }
.active { width: 62px; height: 66px; margin-top: 12px; background: #fff; border-radius: 20px 20px 0 0; display: flex; justify-content: center; padding-top: 19px; position: relative; flex: none; }
.active::before, .active::after { content: ''; position: absolute; bottom: 0; width: 22px; height: 22px; background: radial-gradient(circle at 0 0, transparent 21.500px, #fff 22px); left: -22px; }
.active::after { left: auto; right: -22px; background: radial-gradient(circle at 100% 0, transparent 21.500px, #fff 22px); }
.favs.right { margin-left: 8px; }
.plus { margin: 29px 0 0 21px; }
.winctl { display: flex; gap: 68px; margin: 29px 0 0 156px; }

.toolbar { height: 91px; flex: none; background: #fff; border-bottom: 2px solid #dfe2df; display: flex; align-items: center; padding-bottom: 1px; position: relative; }
.toolbar::before, .toolbar::after { content: ''; position: absolute; top: 0; left: 0; width: 14px; height: 14px; background: radial-gradient(circle at 100% 100%, transparent 13.500px, #d3e1fc 14px); }
.toolbar::after { left: auto; right: 0; background: radial-gradient(circle at 0 100%, transparent 13.500px, #d3e1fc 14px); }
.navbtns { display: flex; gap: 46px; margin-left: 31px; width: 202px; flex: none; }
.omnibox { width: 1420px; height: 65px; border-radius: 33px; background: #ecf0fa; display: flex; align-items: center; flex: none; margin-top: -1px; }
.site { width: 46px; height: 46px; border-radius: 50%; background: #fff; margin-left: 10px; display: flex; align-items: center; justify-content: center; }
.url { font-size: 26px; margin-left: 16px; color: #1f1f1f; line-height: 40px; display: inline-block; flex: none; }
.url i { color: #474747; }
.zoomout { margin-left: 30px; }
.star { margin-left: 34px; }
.ext { margin-left: 35px; margin-top: -4px; }
.tsep { width: 4px; height: 31px; background: #d3e3fd; border-radius: 2px; margin-left: 31px; }
.avatar { width: 39px; height: 39px; border-radius: 50%; background: #455a64; color: #fff; font: 500 20px/39px Roboto, sans-serif; text-align: center; margin-left: 31px; }
.kebab { margin-left: 46px; }

.awsnav { height: 95px; flex: none; background: #161d26; border-bottom: 1px solid #424650; }
.row1 { height: 53px; border-bottom: 1px solid #424650; display: flex; align-items: center; color: #dedee3; padding-bottom: 1px; }
.awslogo { margin: -3px 0 0 22px; width: 42px; height: 31px; display: block; position: relative; flex: none; }
.awslogo b { font: 500 22px/20px "Open Sans", sans-serif; display: inline-block; margin-left: 1px; color: #fff; }
.awslogo svg { margin-top: -1px; }
.vd { width: 1px; height: 31px; background: #424650; display: block; }
.d1 { margin-left: 20px; margin-right: 21px; }
.apps { flex: none; }
.search { width: 697px; height: 39px; border: 2px solid #656871; border-radius: 10px; background: #0f141a; margin-left: 22px; display: flex; align-items: center; padding: 0 11px 0 14px; flex: none; }
.search em { font-size: 17.500px; color: #a4abb5; margin-left: 11px; display: inline-block; }
.alt { margin-left: auto; font-size: 17.500px; color: #a4abb5; }
.icons { display: flex; align-items: center; gap: 21.300px; margin-left: 384px; flex: none; }
.region, .user { font-size: 16px; font-weight: 500; flex: none; margin-top: -1px; }
.region { margin-left: 22px; }
.user { margin-left: 22px; }
.d2 { margin-left: 22px; }
.caret { width: 11px; height: 9px; clip-path: polygon(0 0, 100% 0, 50% 100%); display: inline-block; }
.caret.light { background: #f0f1f3; margin-left: 7.500px; }
.row2 { height: 41px; display: flex; align-items: center; }
.favlist { width: 1864px; margin-left: 21px; overflow: hidden; display: flex; flex: none; }
.svc { display: flex; align-items: center; flex: none; height: 30px; }
.svc b { font-size: 16px; font-weight: 500; color: #e6e8eb; margin: -1px 0 0 5px; flex: none; }
.tile { width: 26px; height: 26px; border-radius: 2px; display: block; position: relative; }
.orange { background: linear-gradient(45deg, #c8511b, #f90); }
.red { background: linear-gradient(45deg, #bd0816, #ff5252); }
.blue { background: linear-gradient(45deg, #2e27ad, #527fff); }
.pink { background: linear-gradient(45deg, #b0084d, #ff4f8b); }
.purple { background: linear-gradient(45deg, #4d27a8, #a166ff); }
.green { background: linear-gradient(45deg, #1b660f, #6cae3e); }
.more { margin-left: 9px; }

.crumbs { height: 55px; flex: none; border-bottom: 1px solid #b4b4bb; display: flex; align-items: center; font-size: 17.500px; }
.burger { width: 38px; height: 38px; border-radius: 50%; background: #006ce0; margin-left: 21px; display: flex; align-items: center; justify-content: center; flex: none; }
.crumbs a { color: #006ce0; border-bottom: 1px solid #006ce0; line-height: 23px; flex: none; }
.c1 { margin-left: 16px; }
.chev { margin: 0 16.500px 0 16px; }
.crumbs b { color: #656871; margin-left: -1.500px; flex: none; margin-top: -1px; }
.q { margin-left: auto; }
.ql { margin: 0 28px 0 29px; }

.body { height: 623px; flex: none; display: flex; border-bottom: 1px solid #c6c6cd; overflow: hidden; }
.side { width: 311px; border-right: 1px solid #b4b4bb; display: flex; flex: none; overflow: hidden; }
.sidelist { width: 281px; flex: none; margin-top: -5px; }
.side p { margin: 0; height: 36.170px; line-height: 36.170px; padding-left: 36.500px; font-size: 17.500px; color: #424650; }
.side h3 { margin: 9px 0 2px; height: 36px; line-height: 34px; padding-top: 2px; font-size: 20px; display: flex; align-items: center; padding-left: 12.500px; font-weight: 700; }
.side h3 span { margin-left: 11px; }
.caret.dark { width: 13px; height: 10px; background: #0f141a; }
.track { width: 29px; background: #fcfcfc; flex: none; display: flex; flex-direction: column; align-items: center; padding: 8px 0 7px; }
.track svg:last-child { margin-top: auto; }
.thumb { width: 17px; border-radius: 9px; background: #8a8a8a; display: block; }
.st { height: 246px; margin-top: 72px; }
.mt { height: 234px; margin-top: 12px; }
.wide { width: 28px; }
main { flex: 1; overflow: hidden; }
.card { width: 1539px; height: 700px; margin: 10px 0 0 21px; border: 1px solid #c6c6cd; border-radius: 20px; }
.title { display: flex; align-items: center; height: 34px; margin: 16px 25px 0 26px; }
h1 { margin: 0; font-size: 24.500px; line-height: 34px; white-space: nowrap; font-weight: 700; flex: none; }
.btn { height: 35px; border-radius: 18px; border: 2px solid #006ce0; background: #fff; color: #006ce0; font: 700 17.500px "Noto Sans", sans-serif; display: flex; align-items: center; padding: 0; flex: none; }
.btn span { flex: none; }
.b1 { width: 228px; margin-left: auto; padding-left: 17px; }
.b1 span { margin-left: 11px; }
.b2 { width: 135px; margin-left: 11px; padding-left: 20px; }
.b3 { width: 269px; margin-left: 10px; background: #f90; border-color: #f90; color: #0f141a; padding-left: 21px; }
.caret.blue { width: 13px; height: 10px; background: #006ce0; margin-left: 13px; }
.grid { display: grid; grid-template-columns: repeat(4, 376.600px); grid-template-rows: repeat(5, 72.350px) 98px 70px; margin: 11px 0 0 26px; font-size: 17.500px; line-height: 26px; height: 533px; }
.lab { font-weight: 700; }
.lab span, .val span { display: inline-block; }
.val { display: flex; align-items: center; height: 26px; }
.copyic { margin: 2px 7px 0 5px; }
.ok { color: #00802f; }
.okic { margin: 0 10px 0 -1px; }
.off { color: #656871; }
.offic { margin-right: 6px; }
.tabs { border-top: 1px solid #c6c6cd; display: flex; padding: 11px 0 0 26px; font-size: 17.500px; font-weight: 700; line-height: 24px; color: #424650; }
.tabs .on { color: #006ce0; margin-top: -3px; }
.tabs i { width: 1px; height: 24px; background: #c6c6cd; margin: 1px 0 0 42px; }
.tabs .t2 { margin: -3px 0 0 28px; }
.tabs .i2 { margin-left: 37px; }
.tabs .t3 { margin: -3px 0 0 27px; }

.panel { height: 41px; flex: none; background: #161d26; border-bottom: 1px solid #424650; display: flex; padding-top: 12px; }
.handle { width: 21px; height: 9px; border: solid #dedee3; border-width: 2.500px 0; margin: 3px 0 0 933px; }
.px { margin-left: auto; margin-right: 23px; margin-top: -1px; }
.foot { height: 37px; flex: none; background: #161d26; display: flex; align-items: center; padding-left: 21px; color: #fff; font-size: 15.800px; font-weight: 500; }
.foot span { flex: none; }
.fc { color: #42b4ff; margin-left: 7px; }
.ff { margin-left: 32px; }
.copyr { margin-left: 993px; color: #dedee3; font-weight: 400; }
.fp { margin-left: 38px; }
.ft { margin-left: 32px; }
.fk { margin-left: 32px; }

.taskbar { height: 60px; flex: none; display: flex; align-items: center; padding-left: 548.500px; background: linear-gradient(90deg, #e2eff9 0, #dcebf8 14%, #d5e1fa 29%, #d5dbf3 33%, #d3e7fb 40%, #d6dff8 46%, #d8dcf2 51%, #d4e0fb 60%, #d6dff8 64%, #dadef0 70%, #dfeaf6 80%, #e1eef9 100%); }
.app { width: 55px; height: 60px; display: flex; justify-content: center; align-items: center; position: relative; flex: none; }
.app > svg:first-child { position: relative; z-index: 1; }
.dot { position: absolute; width: 8px; height: 4px; border-radius: 2px; background: #77797f; bottom: 6px; left: 23.500px; }
.act::before { content: ''; position: absolute; left: 4px; top: 6px; width: 48px; height: 48px; background: #edf1fa; border-radius: 5px; border: 1px solid #e4eaf6; }
.bar { position: absolute; width: 20px; height: 4px; border-radius: 2px; background: #0078d7; bottom: 6px; left: 18px; z-index: 2; }
.check { position: absolute; left: 29px; top: 9px; z-index: 2; }
.pb { position: absolute; z-index: 2; border-radius: 50%; background: #455a64; color: #fff; font: 500 12px/20px Roboto, sans-serif; text-align: center; }
.p1 { width: 20px; height: 20px; left: 29px; top: 9px; }
.p2 { width: 15px; height: 15px; font-size: 9px; line-height: 15px; left: 28px; top: 30px; }
.tray { display: flex; align-items: center; gap: 8.500px; margin-left: 252.500px; flex: none; }
.clock { width: 80px; margin-left: 6px; display: flex; flex-direction: column; align-items: center; font-size: 15px; line-height: 21px; color: #111; flex: none; }
.notif { margin-left: 17px; }
.peek { width: 1px; height: 60px; background: #b9c5d2; margin-left: 25px; }
</style>
